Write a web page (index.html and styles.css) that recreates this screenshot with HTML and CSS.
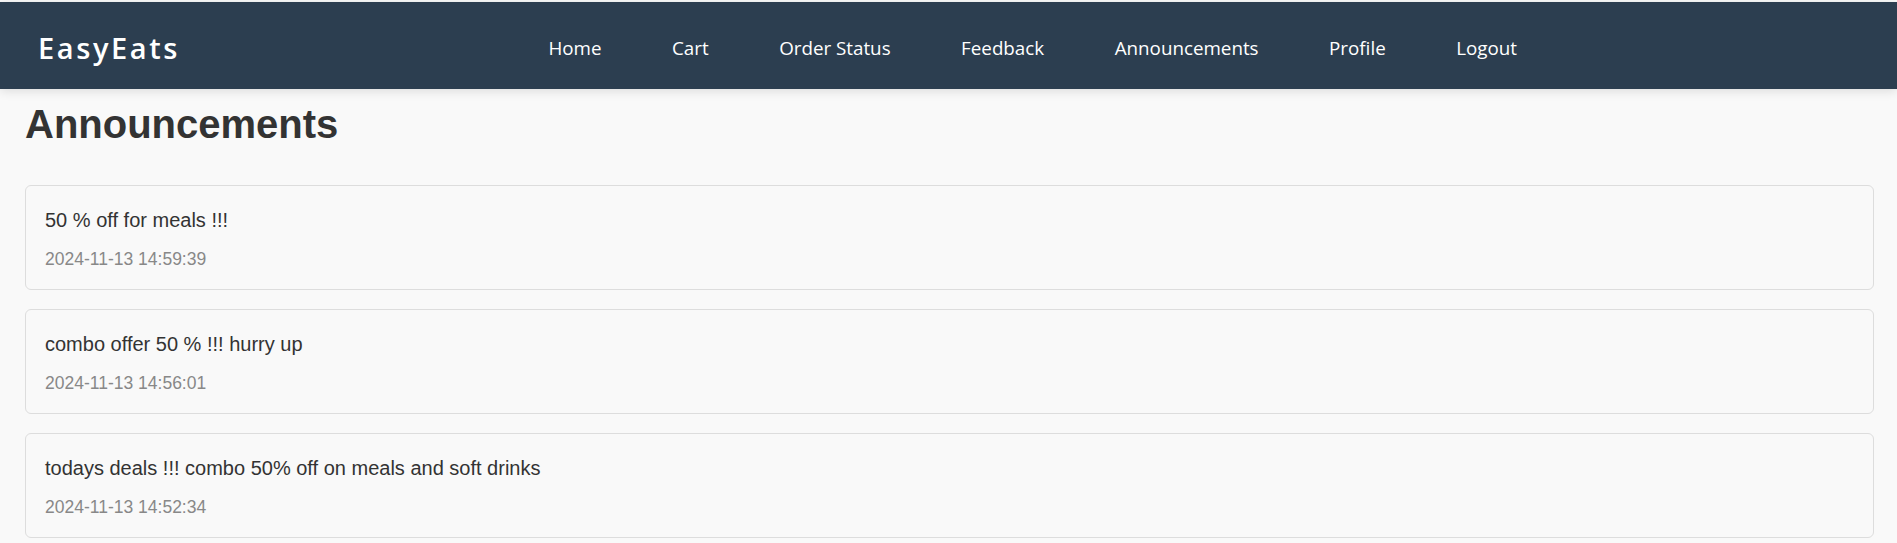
FILE: index.html
```html
<!DOCTYPE html>
<html lang="en">
<head>
<meta charset="utf-8">
<title>EasyEats - Announcements</title>
<link rel="stylesheet" href="styles.css">
</head>
<body>
<nav class="navbar">
  <div class="brand">EasyEats</div>
  <ul class="nav-links">
    <li><a href="#">Home</a></li>
    <li><a href="#">Cart</a></li>
    <li><a href="#">Order Status</a></li>
    <li><a href="#">Feedback</a></li>
    <li><a href="#">Announcements</a></li>
    <li><a href="#">Profile</a></li>
    <li><a href="#">Logout</a></li>
  </ul>
</nav>
<main class="content">
  <h1 class="page-title">Announcements</h1>
  <div class="announcement">
    <p class="message">50 % off for meals !!!</p>
    <p class="date">2024-11-13 14:59:39</p>
  </div>
  <div class="announcement">
    <p class="message">combo offer 50 % !!! hurry up</p>
    <p class="date">2024-11-13 14:56:01</p>
  </div>
  <div class="announcement">
    <p class="message">todays deals !!! combo 50% off on meals and soft drinks</p>
    <p class="date">2024-11-13 14:52:34</p>
  </div>
</main>
</body>
</html>
```
FILE: styles.css
```css
* { box-sizing: border-box; }

body {
  margin: 0;
  padding-top: 2px;
  background: #f9f9f9;
  font-family: "Liberation Sans", Arial, sans-serif;
  color: #333;
}

.navbar {
  height: 87px;
  background: #2c3e50;
  display: flex;
  align-items: center;
  padding-left: 38px;
  box-shadow: 0 2px 10px rgba(0, 0, 0, 0.12);
}

.brand {
  font-family: "Open Sans", "Noto Sans", sans-serif;
  font-weight: 600;
  font-size: 29px;
  letter-spacing: 2.6px;
  color: #fff;
  padding-top: 3px;
}

.nav-links {
  list-style: none;
  margin: 0 380px 0 auto;
  padding: 0;
  display: flex;
  gap: 70.5px;
  padding-top: 4px;
}

.nav-links a {
  font-family: "Open Sans", "Noto Sans", sans-serif;
  font-size: 18.8px;
  color: #fff;
  text-decoration: none;
}

.content {
  padding: 0 23px 0 25px;
}

.page-title {
  margin: 13px 0 38px;
  font-size: 40px;
  font-weight: bold;
  color: #333;
}

.announcement {
  background: #f9f9f9;
  border: 1px solid #dddddd;
  border-radius: 6px;
  padding: 23px 19px 19px;
  margin-bottom: 19px;
}

.message {
  margin: 0 0 17px;
  font-size: 20px;
  color: #333;
}

.date {
  margin: 0;
  font-size: 17.5px;
  color: #888;
}
```
